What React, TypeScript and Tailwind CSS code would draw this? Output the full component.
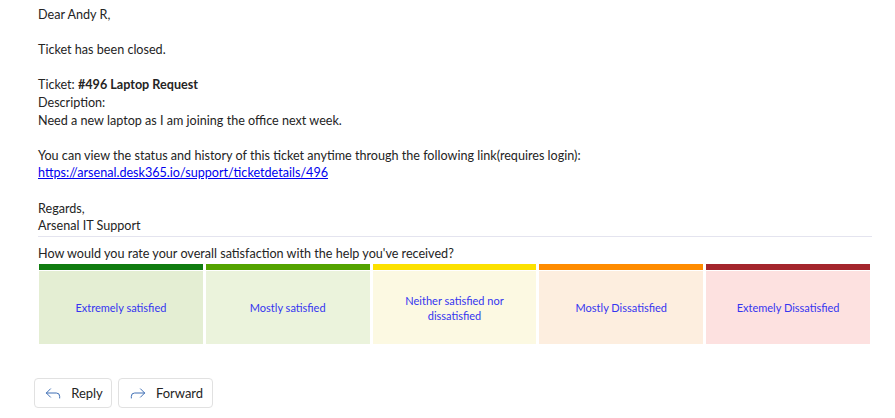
import { Reply, Forward } from 'lucide-react'

const ratings = [
  { label: 'Extremely satisfied', bar: 'bg-[#107c10]', cell: 'bg-[#e4eed3]' },
  { label: 'Mostly satisfied', bar: 'bg-[#54a300]', cell: 'bg-[#ebf3dc]' },
  { label: 'Neither satisfied nor dissatisfied', bar: 'bg-[#fce100]', cell: 'bg-[#fcf9e2]' },
  { label: 'Mostly Dissatisfied', bar: 'bg-[#ff8c00]', cell: 'bg-[#fdeedf]' },
  { label: 'Extemely Dissatisfied', bar: 'bg-[#a4262c]', cell: 'bg-[#fde1e0]' },
]

export default function App() {
  return (
    <div className="w-[895px] h-[418px] bg-white font-['Lato',sans-serif] text-[#242424] overflow-hidden">
      <div className="pl-[38px] pr-[23px] pt-[6px] text-[12.6px] leading-[17.6px]">
        <p>Dear Andy R,</p>
        <p>&nbsp;</p>
        <p>Ticket has been closed.</p>
        <p>&nbsp;</p>
        <p>
          Ticket: <b>#496 Laptop Request</b>
        </p>
        <p>Description:</p>
        <p>Need a new laptop as I am joining the office next week.</p>
        <p>&nbsp;</p>
        <p>You can view the status and history of this ticket anytime through the following link(requires login):</p>
        <p>
          <a href="#" className="text-[#0000ee] underline">
            https://arsenal.desk365.io/support/ticketdetails/496
          </a>
        </p>
        <p>&nbsp;</p>
        <p>Regards,</p>
        <p>Arsenal IT Support</p>
        <div className="h-px bg-[#e4e4ef] mt-[1px] mb-[8px]" />
        <p>How would you rate your overall satisfaction with the help you've received?</p>

        {/* Rating table */}
        <div className="mt-[2px] flex gap-[3px] w-[831px] ml-px">
          {ratings.map((r) => (
            <div key={r.label} className="flex-1 flex flex-col">
              <div className={`h-[6px] ${r.bar}`} />
              <div className={`mt-px h-[73px] flex items-center justify-center text-center px-6 text-[11px] leading-[15px] text-[#3535f0] ${r.cell}`}>
                {r.label}
              </div>
            </div>
          ))}
        </div>
      </div>

      {/* Actions */}
      <div className="flex gap-[6px] pl-[34px] mt-[34px]">
        <button className="h-[30px] w-[78px] flex items-center justify-center gap-[8px] border border-[#e1e1e1] rounded-[4px] text-[13px] text-[#242424]">
          <Reply className="w-5 h-5 text-[#3f6fb5]" strokeWidth={1.2} />
          Reply
        </button>
        <button className="h-[30px] w-[95px] flex items-center justify-center gap-[8px] border border-[#e1e1e1] rounded-[4px] text-[13px] text-[#242424]">
          <Forward className="w-5 h-5 text-[#3f6fb5]" strokeWidth={1.2} />
          Forward
        </button>
      </div>
    </div>
  )
}
